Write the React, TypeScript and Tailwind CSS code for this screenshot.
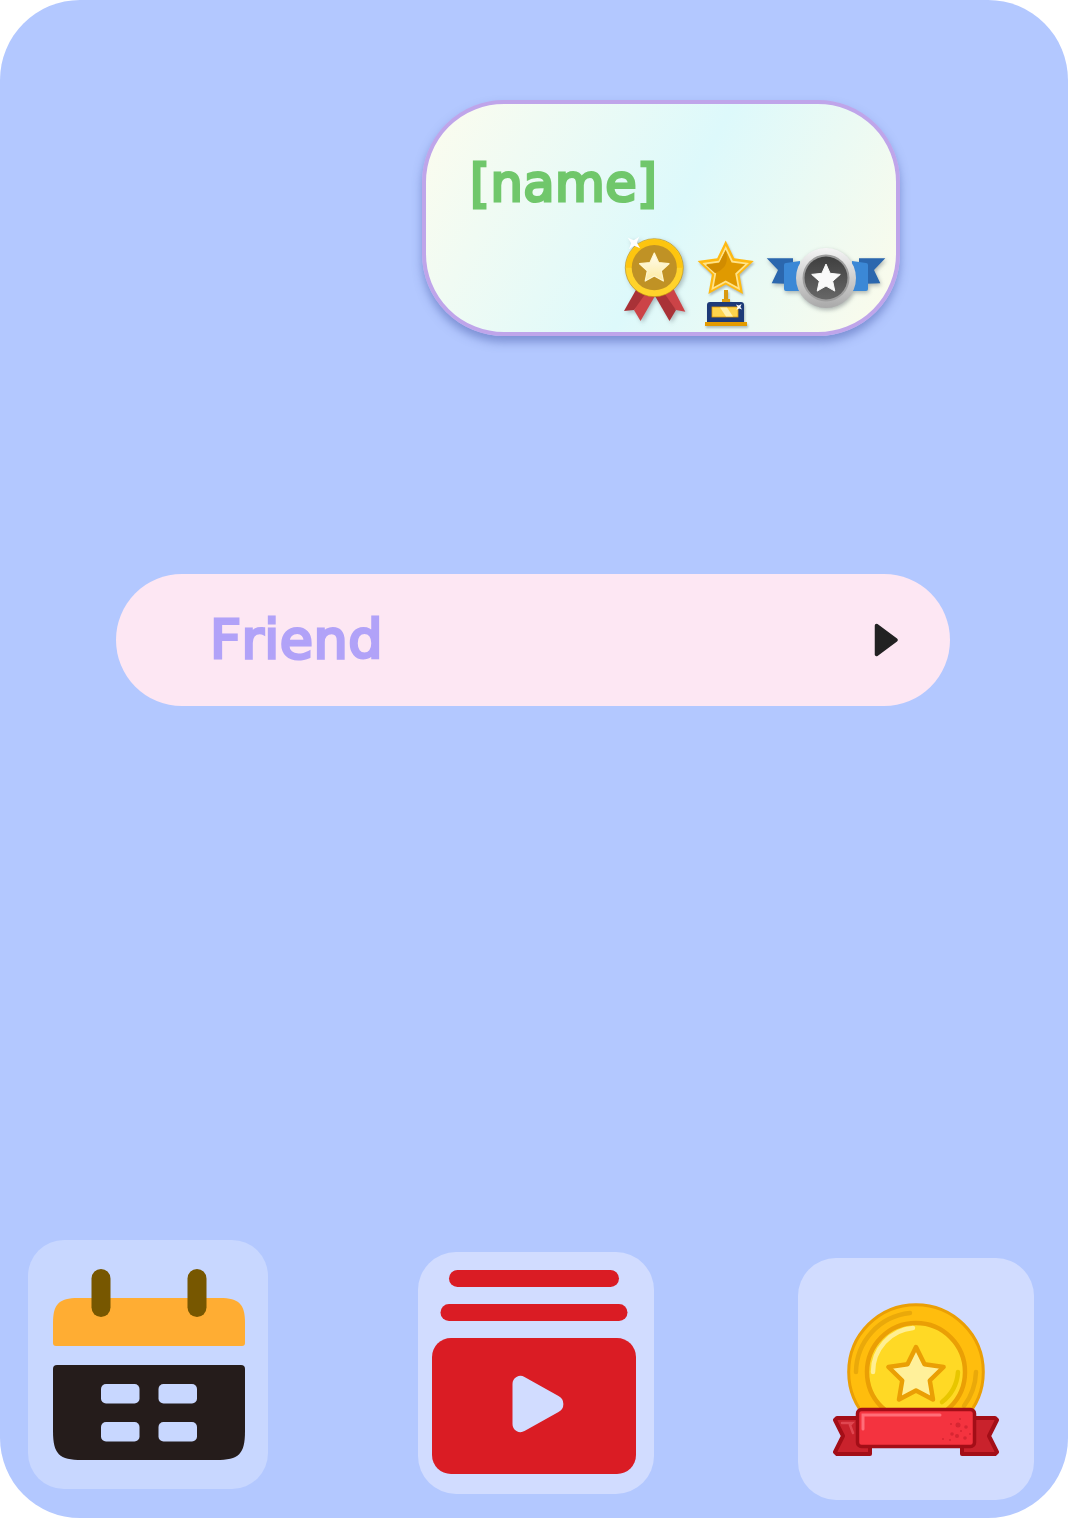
const star = (cx: number, cy: number, R: number, r: number) => {
  const pts: string[] = [];
  for (let i = 0; i < 10; i++) {
    const rad = i % 2 === 0 ? R : r;
    const a = (-90 + i * 36) * (Math.PI / 180);
    pts.push(`${(cx + rad * Math.cos(a)).toFixed(1)},${(cy + rad * Math.sin(a)).toFixed(1)}`);
  }
  return pts.join(" ");
};

function Sparkle({ x, y, s }: { x: number; y: number; s: number }) {
  return (
    <path
      d={`M${x} ${y - s}L${x + s * 0.25} ${y - s * 0.25}L${x + s} ${y}L${x + s * 0.25} ${y + s * 0.25}L${x} ${y + s}L${x - s * 0.25} ${y + s * 0.25}L${x - s} ${y}L${x - s * 0.25} ${y - s * 0.25}Z`}
      fill="#fff"
      transform={`rotate(40 ${x} ${y})`}
    />
  );
}

function GoldMedal() {
  return (
    <svg viewBox="622 234 70 92" className="w-[70px] h-[92px] drop-shadow-[2px_2px_2px_rgba(40,50,60,0.3)]">
      <defs>
        <linearGradient id="gmStar" x1="0" y1="0" x2="0" y2="1">
          <stop offset="0" stopColor="#fffdf0" />
          <stop offset="1" stopColor="#fdeaa0" />
        </linearGradient>
      </defs>
      {/* ribbons */}
      <polygon points="624,311 637,288 650,293 634,310" fill="#a93237" />
      <polygon points="634,310 640.5,321 655,296 648,290" fill="#cc4347" />
      <polygon points="685.3,311.7 673,288 660,293 676,310" fill="#cc4347" />
      <polygon points="676,310 669.5,321 655,296 662,290" fill="#a93237" />
      <circle cx="654.3" cy="267.7" r="29" fill="#ffd32a" stroke="#b98a10" strokeWidth="0.6" />
      <path d="M626 267.7a28.3 28.3 0 0 1 56.6 0z" fill="#fdc50f" />
      <circle cx="654.3" cy="267.7" r="22.6" fill="#c09225" />
      <polygon points={star(654.3, 268.5, 15.5, 7.4)} fill="url(#gmStar)" stroke="#fff6cf" strokeWidth="1.2" strokeLinejoin="round" />
      <Sparkle x={634} y={243} s={8} />
    </svg>
  );
}

function StarTrophy() {
  return (
    <svg viewBox="696 238 60 90" className="w-[60px] h-[90px] drop-shadow-[1px_2px_1px_rgba(40,50,60,0.3)]">
      <rect x="724" y="290" width="4" height="11" fill="#d99a10" />
      <rect x="722" y="299" width="8" height="3.5" fill="#e0a010" />
      <path d="M710 302h31a3 3 0 0 1 3 3v17h-37v-17a3 3 0 0 1 3-3z" fill="#1d3a78" />
      <rect x="705" y="322" width="42" height="4" fill="#e39b00" />
      <rect x="712" y="307" width="26" height="10" fill="#fdd34d" stroke="#e39b00" strokeWidth="0.8" />
      <polygon points="720,307.5 727,307.5 733,316.5 726,316.5" fill="#fff0ac" />
      <Sparkle x={739} y={307} s={4} />
      <polygon points={star(725.7, 270, 29.5, 14.5)} fill="#ffba12" />
      <polygon points={star(725.7, 270.5, 24.5, 12)} fill="#ffe38a" />
      <polygon points={star(725.7, 270.5, 20.5, 10)} fill="#e09a00" />
      <path d="M725.7 250L719 263L706 265L715 273C722 270 730 266 725.7 250z" fill="#d18c00" />
    </svg>
  );
}

function SilverBadge() {
  return (
    <svg viewBox="764 246 126 66" className="w-[126px] h-[66px] drop-shadow-[1px_2px_2px_rgba(40,50,60,0.35)]">
      <defs>
        <linearGradient id="sbRing" x1="0" y1="0" x2="0" y2="1">
          <stop offset="0" stopColor="#f5f5f5" />
          <stop offset="1" stopColor="#a9a9a9" />
        </linearGradient>
        <linearGradient id="sbInner" x1="0" y1="0" x2="0" y2="1">
          <stop offset="0" stopColor="#3f3f3f" />
          <stop offset="1" stopColor="#676767" />
        </linearGradient>
      </defs>
      <polygon points="766.7,258.3 793,258.3 793,284 771.7,283.3 778,270" fill="#2b67ae" />
      <polygon points="885.3,258.3 859,258.3 859,284 880.3,283.3 874,270" fill="#2b67ae" />
      <path d="M786 263L800 261V291L786 291a2 2 0 0 1-2-2V265a2 2 0 0 1 2-2z" fill="#3b88d6" />
      <path d="M866 263L852 261V291L866 291a2 2 0 0 0 2-2V265a2 2 0 0 0-2-2z" fill="#3b88d6" />
      <circle cx="826" cy="278" r="30" fill="url(#sbRing)" />
      <circle cx="826" cy="278" r="23.5" fill="#9d9d9d" />
      <circle cx="826" cy="278" r="21.5" fill="url(#sbInner)" />
      <polygon points={star(826, 279, 15, 7)} fill="#fafafa" stroke="#fafafa" strokeWidth="1" strokeLinejoin="round" />
    </svg>
  );
}

function CalendarIcon() {
  return (
    <svg viewBox="53 1269 192 192" className="w-[192px] h-[192px]">
      <path d="M53 1343v-20c0-19 6-25 25-25h142c19 0 25 6 25 25v20a3 3 0 0 1-3 3H56a3 3 0 0 1-3-3z" fill="#ffad33" />
      <rect x="91.5" y="1269" width="19" height="48" rx="9.5" fill="#775700" />
      <rect x="187.5" y="1269" width="19" height="48" rx="9.5" fill="#775700" />
      <path d="M53 1369a4 4 0 0 1 4-4h184a4 4 0 0 1 4 4v62c0 23-6 29-29 29H82c-23 0-29-6-29-29z" fill="#251c1b" />
      <rect x="101" y="1384" width="38.500" height="19.500" rx="5" fill="#c8d7ff" />
      <rect x="158.500" y="1384" width="38.500" height="19.500" rx="5" fill="#c8d7ff" />
      <rect x="101" y="1422" width="38.500" height="19.500" rx="5" fill="#c8d7ff" />
      <rect x="158.500" y="1422" width="38.500" height="19.500" rx="5" fill="#c8d7ff" />
    </svg>
  );
}

function VideoIcon() {
  return (
    <svg viewBox="432 1270 204 204" className="w-[204px] h-[204px]">
      <rect x="449" y="1270" width="170" height="17" rx="8.500" fill="#da1c24" />
      <rect x="440.500" y="1304" width="187" height="17" rx="8.500" fill="#da1c24" />
      <rect x="432" y="1338" width="204" height="136" rx="19" fill="#da1c24" />
      <path
        d="M512.500 1384a8 8 0 0 1 12-7l34 19a9 9 0 0 1 0 16l-34 19a8 8 0 0 1-12-7z"
        fill="#d1dcff"
      />
    </svg>
  );
}

function CoinIcon() {
  return (
    <svg viewBox="833 1303 166 154" className="w-[166px] h-[154px]">
      <circle cx="916" cy="1372" r="67.300" fill="#ffbd0d" stroke="#ea9f05" strokeWidth="3" />
      <path d="M856 1372a60 60 0 0 1 54-59" fill="none" stroke="#eaa90a" strokeWidth="4.500" strokeLinecap="round" />
      <path d="M976 1372a60 60 0 0 1-12 34" fill="none" stroke="#eaa90a" strokeWidth="4.500" strokeLinecap="round" />
      <circle cx="916" cy="1372" r="49" fill="#ffd925" stroke="#ea9f05" strokeWidth="4.500" />
      <path d="M873 1372a44 44 0 0 1 40-44" fill="none" stroke="#ffef93" strokeWidth="4.500" strokeLinecap="round" />
      <path d="M958 1372a42 42 0 0 1-16 30" fill="none" stroke="#e8c600" strokeWidth="4.500" strokeLinecap="round" />
      <polygon points={star(916, 1376, 29, 14.500)} fill="#fff09a" stroke="#ea9f05" strokeWidth="4.500" strokeLinejoin="round" />
      <path d="M837 1418h33v36h-33l-2-2 8-16-8-16z" fill="#c9222c" stroke="#a30e17" strokeWidth="4" strokeLinejoin="round" />
      <path d="M995 1418h-33v36h33l2-2-8-16 8-16z" fill="#c9222c" stroke="#a30e17" strokeWidth="4" strokeLinejoin="round" />
      <path d="M842 1423h10l-2 2 3 8" fill="none" stroke="#e04650" strokeWidth="2.500" strokeLinecap="round" />
      <rect x="857.500" y="1409.500" width="117" height="37" rx="4" fill="#f4333f" stroke="#a30e17" strokeWidth="3.500" />
      <path d="M863 1429v-14h77" fill="none" stroke="#ff6e78" strokeWidth="3" strokeLinecap="round" />
      {[
        [958, 1425, 2.5],
        [966, 1427, 1.8],
        [952, 1434, 1.8],
        [961, 1431, 1],
        [957, 1436, 2],
        [965, 1438, 1.800],
        [950, 1440, 1],
        [943, 1439, 1],
        [951, 1424, 1],
        [970, 1434, 1],
        [960, 1419, 1],
      ].map(([cx, cy, r], i) => (
        <circle key={i} cx={cx} cy={cy} r={r} fill="#d72632" />
      ))}
    </svg>
  );
}

export default function App() {
  return (
    <div className="w-[1068px] h-[1518px] rounded-[80px] overflow-hidden bg-[#b3c8ff] flex flex-col font-['DejaVu_Sans',sans-serif] [font-kerning:none]">
      {/* profile card */}
      <div className="mt-[100px] ml-[422px] w-[478px] h-[236px] shrink-0 rounded-[82px] border-4 border-[#bfa5ea] bg-[linear-gradient(118deg,#faFcef_4%,#ddf9fb_52%,#f9fbec_95%)] shadow-[0_6px_10px_rgba(70,90,170,0.5)] flex flex-col">
        <div className="ml-[44px] mt-[40px] h-[90px] text-[51px] leading-[80px] tracking-[0.5px] text-[#70c76b] [-webkit-text-stroke:3px_#70c76b]">
          [name]
        </div>
        <div className="flex items-start ml-[196px]">
          <GoldMedal />
          <div className="ml-[4px] mt-[4px]">
            <StarTrophy />
          </div>
          <div className="ml-[8px] mt-[12px]">
            <SilverBadge />
          </div>
        </div>
      </div>

      {/* friend row */}
      <div className="mt-[238px] ml-[116px] w-[834px] h-[132px] shrink-0 rounded-full bg-[#fde7f3] flex items-center justify-between pl-[94px] pr-[52px]">
        <span className="text-[54px] leading-[72px] tracking-[0.5px] text-[#b1a2f8] [-webkit-text-stroke:3px_#b1a2f8]">Friend</span>
        <svg viewBox="0 0 24 34" className="w-[24px] h-[34px]">
          <path d="M2.500 2.500L22 17L2.500 31.500Z" fill="#222222" stroke="#222222" strokeWidth="3.500" strokeLinejoin="round" />
        </svg>
      </div>

      {/* bottom buttons */}
      <div className="mt-[534px] ml-[28px] flex items-start">
        <div className="w-[240px] h-[249px] rounded-[36px] bg-[#c8d7ff] pl-[25px] pt-[29px]">
          <CalendarIcon />
        </div>
        <div className="ml-[150px] mt-[12px] w-[236px] h-[242px] rounded-[38px] bg-[#d1dcff] pl-[14px] pt-[18px]">
          <VideoIcon />
        </div>
        <div className="ml-[144px] mt-[18px] w-[236px] h-[242px] rounded-[38px] bg-[#d1dcff] pl-[35px] pt-[45px]">
          <CoinIcon />
        </div>
      </div>
    </div>
  );
}
